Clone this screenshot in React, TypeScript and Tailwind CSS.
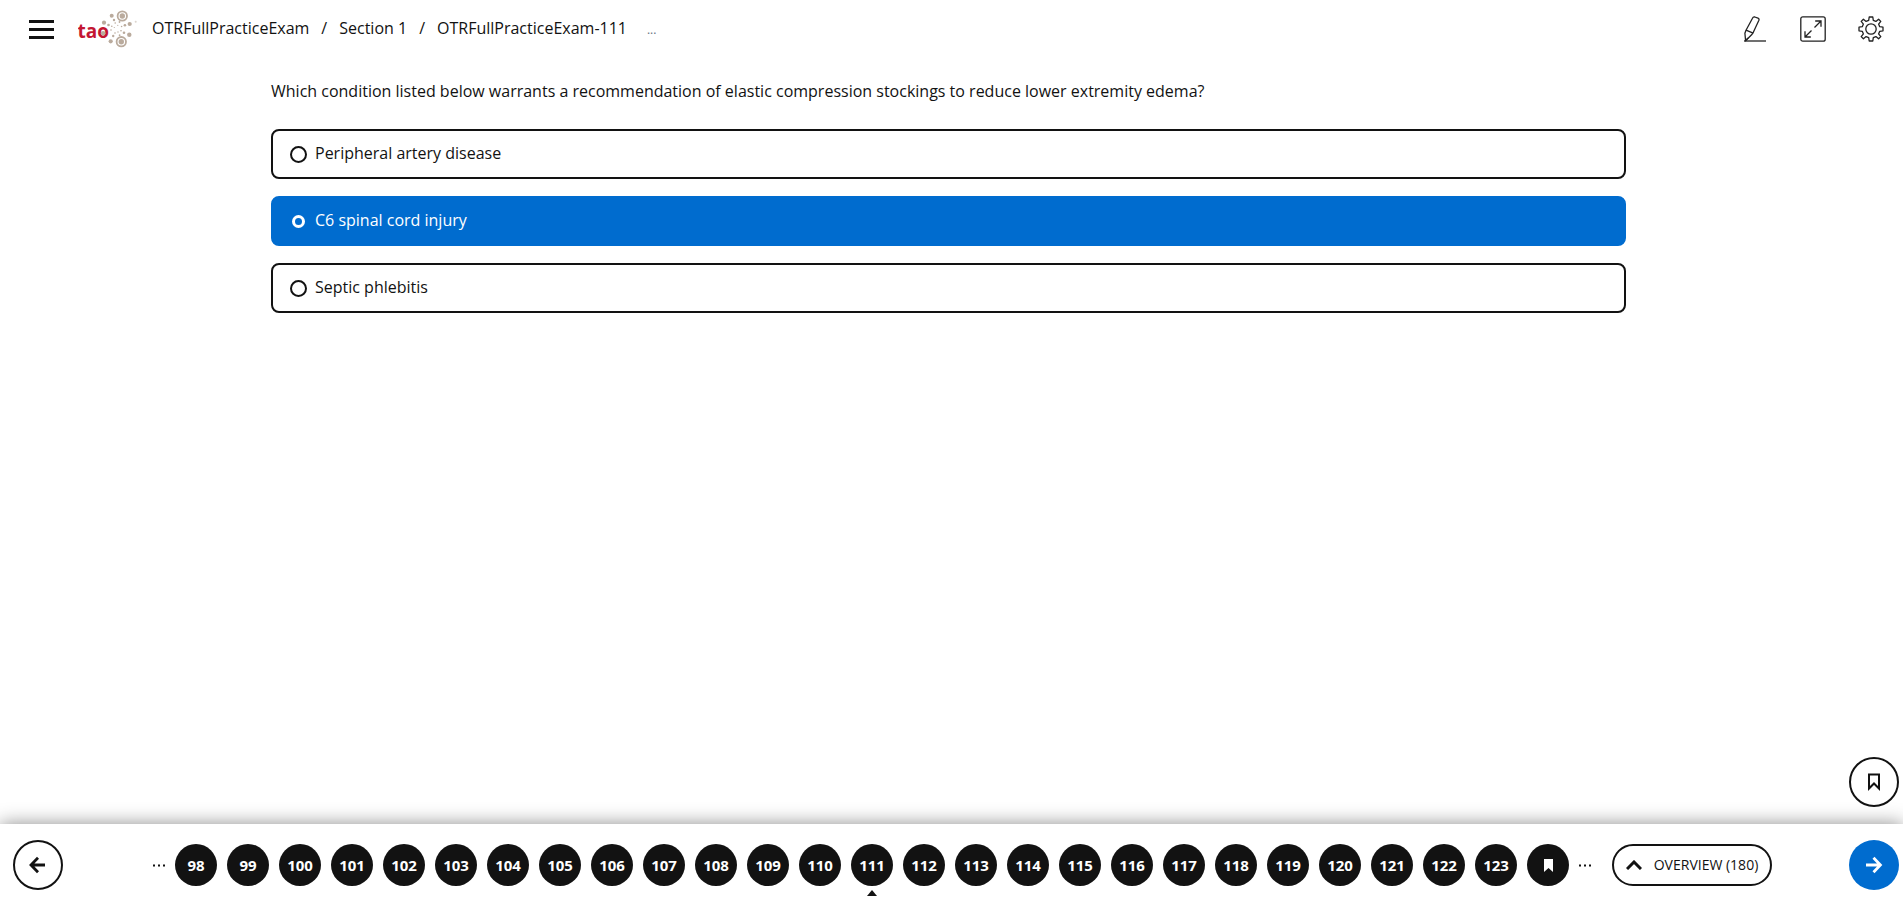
import { useState } from "react";

const questions = Array.from({ length: 26 }, (_, i) => 98 + i);
const choices = ["Peripheral artery disease", "C6 spinal cord injury", "Septic phlebitis"];

function Logo() {
  return (
    <svg width="60" height="40" viewBox="0 1 60 40" role="img" aria-label="tao">
      <g fill="#baab9d">
        <circle cx="33.7" cy="7.7" r="2" />
        <circle cx="26" cy="14.7" r="2.1" />
        <circle cx="51.7" cy="16" r="2.1" />
        <circle cx="51.3" cy="26.7" r="2.2" />
        <circle cx="32.7" cy="33.3" r="2.1" />
        <circle cx="44.3" cy="8" r="2.7" />
        <circle cx="43.3" cy="33.7" r="2.7" />
        <circle cx="30.5" cy="17" r="1.3" />
        <circle cx="36" cy="12" r="1.2" />
        <circle cx="46.9" cy="17.3" r="1.3" />
        <circle cx="46" cy="24.7" r="1.3" />
        <circle cx="35.2" cy="28" r="1.2" />
        <circle cx="41.6" cy="27.2" r="0.9" />
        <circle cx="41.5" cy="14" r="0.9" />
        <circle cx="33.8" cy="18.3" r="0.8" />
        <circle cx="37.2" cy="15" r="0.8" />
        <circle cx="43.6" cy="18.5" r="0.8" />
        <circle cx="43" cy="22.8" r="0.8" />
        <circle cx="37" cy="25" r="0.8" />
        <circle cx="40" cy="24" r="0.7" />
        <circle cx="33" cy="22" r="0.8" />
        <circle cx="36.3" cy="19.5" r="0.6" />
        <circle cx="39.8" cy="17.3" r="0.6" />
        <circle cx="57.7" cy="13.7" r="1" opacity="0.5" />
      </g>
      <g fill="none" stroke="#baab9d" strokeWidth="1.8">
        <circle cx="44.3" cy="8" r="4.7" />
        <circle cx="43.3" cy="33.7" r="4.7" />
      </g>
      <text x="-0.5" y="30.3" fill="#c31632" fontFamily="Open Sans, sans-serif" fontWeight="700" fontSize="19">
        tao
      </text>
      <circle cx="25.1" cy="25.2" r="2.3" fill="#baab9d" />
    </svg>
  );
}

function HighlighterIcon() {
  return (
    <svg width="26" height="26" viewBox="0 0 26 26" fill="none" stroke="#222" strokeWidth="1.3" strokeLinejoin="round" aria-hidden="true">
      <path d="M10.5 2.2Q11.2.6 12.8 1L16 2.2Q17.4 2.8 16.9 4.2L11.2 16.6 9.6 18.8 3.6 24.8 2.9 17.2 4 14.2Z" />
      <path d="M4 14.2 11.2 17.2M3 24.8 6.2 22" />
      <path d="M2 25H24" />
    </svg>
  );
}

function FullscreenIcon() {
  return (
    <svg width="26" height="26" viewBox="0 0 26 26" fill="none" stroke="#222" strokeWidth="1.3" aria-hidden="true">
      <rect x="0.8" y="0.8" width="24.4" height="24.4" rx="2" />
      <path d="M14.5 11.5 21 5M15.2 5H21V10.8M11.5 14.5 5 21M5 15.2V21H10.8" />
    </svg>
  );
}

function GearIcon() {
  return (
    <svg width="26" height="26" viewBox="0 0 26 26" fill="none" stroke="#222" strokeWidth="1.3" strokeLinejoin="round" aria-hidden="true">
      <circle cx="13" cy="13" r="5.2" />
      <path d="M11.2 1H14.8L15.3 4.3 17.9 5.4 20.6 3.2 22.8 5.4 20.6 8.1 21.7 10.7 25 11.2V14.8L21.7 15.3 20.6 17.9 22.8 20.6 20.6 22.8 17.9 20.6 15.3 21.7 14.8 25H11.2L10.7 21.7 8.1 20.6 5.4 22.8 3.2 20.6 5.4 17.9 4.3 15.3 1 14.8V11.2L4.3 10.7 5.4 8.1 3.2 5.4 5.4 3.2 8.1 5.4 10.7 4.3Z" />
    </svg>
  );
}

function ArrowIcon({ left = false }: { left?: boolean }) {
  return (
    <svg width="18" height="18" viewBox="0 0 18 18" fill="none" stroke="currentColor" strokeWidth="2.8" aria-hidden="true">
      <path d={left ? "M16 9H2.500M9 1.8 2 9 9 16.2" : "M1 9H15M8.5 1.8 15.4 9 8.5 16.2"} />
    </svg>
  );
}

function MoreDots() {
  return (
    <svg width="12" height="3" viewBox="0 0 12 3" fill="#121212" role="img" aria-label="More questions">
      <path d="M0 .5H2V2.500H0ZM5 .5H7V2.500H5ZM10 .5H12V2.500H10Z" />
    </svg>
  );
}

export default function App() {
  const [selected, setSelected] = useState(1);
  const [current, setCurrent] = useState(111);

  return (
    <div className="flex min-h-screen flex-col bg-white font-['Open_Sans',sans-serif] text-[#121212]">
      <header className="flex h-[58px] items-center pr-[19px] pl-[29px]">
        <button type="button" aria-label="Menu" className="flex w-[25px] flex-col gap-[5px]">
          <span className="h-[3px] bg-[#121212]" />
          <span className="h-[3px] bg-[#121212]" />
          <span className="h-[3px] bg-[#121212]" />
        </button>
        <div className="ml-6">
          <Logo />
        </div>
        <nav aria-label="Breadcrumb" className="ml-[14px]">
          <ol className="flex gap-3 pt-0.5 text-base leading-6">
            <li>OTRFullPracticeExam</li>
            <li aria-hidden="true">/</li>
            <li>Section 1</li>
            <li aria-hidden="true">/</li>
            <li>OTRFullPracticeExam-111</li>
            <li className="ml-2 text-xs leading-7 text-gray-500">...</li>
          </ol>
        </nav>
        <div className="ml-auto flex gap-8">
          <button type="button" aria-label="Highlighter"><HighlighterIcon /></button>
          <button type="button" aria-label="Full screen"><FullscreenIcon /></button>
          <button type="button" aria-label="Settings"><GearIcon /></button>
        </div>
      </header>

      <main className="flex flex-1 flex-col pr-[6px]">
        <fieldset className="mx-auto w-full max-w-[1355px] pt-[21px]">
          <legend className="contents">
            <span className="block text-base leading-6">
              Which condition listed below warrants a recommendation of elastic compression stockings to reduce lower
              extremity edema?
            </span>
          </legend>
          <div className="mt-[26px] flex flex-col gap-[17px]">
            {choices.map((choice, i) => (
              <label
                key={choice}
                className={
                  i === selected
                    ? "flex h-[50px] items-center gap-2 rounded-lg border-2 border-[#006ccf] bg-[#006ccf] px-[17px] font-medium text-white"
                    : "flex h-[50px] items-center gap-2 rounded-lg border-2 border-[#121212] px-[17px]"
                }
              >
                <input
                  type="radio"
                  name="answer"
                  checked={i === selected}
                  onChange={() => setSelected(i)}
                  className="size-[17px] appearance-none rounded-full border-2 border-[#121212] checked:m-[2px] checked:size-[13px] checked:border-[3px] checked:border-white"
                />
                <span className="mb-0.5 text-base leading-6">{choice}</span>
              </label>
            ))}
          </div>
        </fieldset>
      </main>

      <div className="flex justify-end pr-1 pb-[17px]">
        <button
          type="button"
          aria-label="Bookmark this question"
          className="flex size-[50px] items-center justify-center rounded-full border-2 border-[#121212]"
        >
          <svg width="14" height="18" viewBox="0 0 14 18" fill="none" stroke="#121212" strokeWidth="2" aria-hidden="true">
            <path d="M2 1.5H12V15.5L7 10.5 2 15.5Z" />
          </svg>
        </button>
      </div>

      <footer className="flex h-[83px] items-center bg-white pr-1 pb-px pl-[13px] shadow-[0_0_18px_rgba(0,0,0,0.45)]">
        <button
          type="button"
          aria-label="Previous"
          className="flex size-[50px] shrink-0 items-center justify-center rounded-full border-2 border-[#121212]"
        >
          <ArrowIcon left />
        </button>
        <nav aria-label="Questions" className="ml-[90px] flex items-center gap-[10px]">
          <MoreDots />
          {questions.map((n) => (
            <button
              key={n}
              type="button"
              aria-current={n === current ? "step" : undefined}
              onClick={() => setCurrent(n)}
              className="relative flex size-[42px] shrink-0 items-center justify-center rounded-full bg-[#121212] text-[15px] leading-5 font-bold text-white"
            >
              {n}
              {n === current && (
                <svg className="absolute top-[46px] left-4" width="10" height="6" viewBox="0 0 10 6" aria-hidden="true">
                  <path d="M0 6 5 0 10 6Z" fill="#121212" />
                </svg>
              )}
            </button>
          ))}
          <button
            type="button"
            aria-label="Question 124, bookmarked"
            className="flex size-[42px] shrink-0 items-center justify-center rounded-full bg-[#121212]"
          >
            <svg width="9" height="13" viewBox="0 0 9 13" aria-hidden="true">
              <path d="M0 0H9V13L4.500 9 0 13Z" fill="#fff" />
            </svg>
          </button>
          <MoreDots />
        </nav>
        <button
          type="button"
          className="ml-[21px] flex h-[42px] w-40 shrink-0 items-center justify-center gap-3 rounded-full border-2 border-[#121212] text-sm leading-5"
        >
          <svg width="16" height="10" viewBox="0 0 16 10" fill="none" stroke="#121212" strokeWidth="3" aria-hidden="true">
            <path d="M1 9 8 2 15 9" />
          </svg>
          OVERVIEW (180)
        </button>
        <button
          type="button"
          aria-label="Next"
          className="ml-auto flex size-[50px] shrink-0 items-center justify-center rounded-full bg-[#006ccf] text-white"
        >
          <ArrowIcon />
        </button>
      </footer>
    </div>
  );
}
